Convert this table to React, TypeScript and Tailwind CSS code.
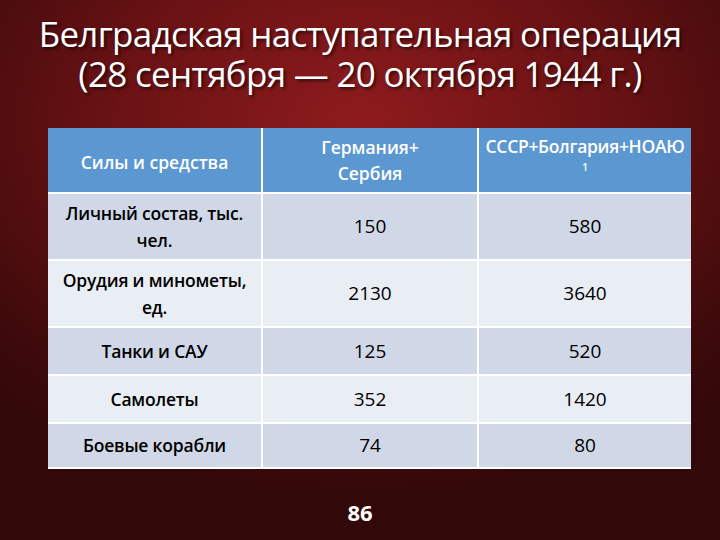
const rows = [
  { label: ["Личный состав, тыс.", "чел."], de: "150", su: "580", h: "h-[67px]", bg: "bg-[#d0d8e8]" },
  { label: ["Орудия и минометы,", "ед."], de: "2130", su: "3640", h: "h-[67px]", bg: "bg-[#e9edf4]" },
  { label: ["Танки и САУ"], de: "125", su: "520", h: "h-[48px]", bg: "bg-[#d0d8e8]" },
  { label: ["Самолеты"], de: "352", su: "1420", h: "h-[48px]", bg: "bg-[#e9edf4]" },
  { label: ["Боевые корабли"], de: "74", su: "80", h: "h-[45px]", bg: "bg-[#d0d8e8]" },
];

export default function App() {
  return (
    <div
      className="flex h-[540px] w-[720px] flex-col overflow-hidden bg-[radial-gradient(ellipse_75%_70%_at_50%_22%,#8e1b1d_0%,#6a1214_45%,#3e0a0b_85%,#330809_100%)] text-white"
      style={{ fontFamily: '"Open Sans", "Noto Sans", sans-serif' }}
    >
      <h1 className="mt-[14px] flex flex-col items-center text-[35px] leading-[40px] tracking-[-0.7px] [text-shadow:2px_2px_3px_rgba(0,0,0,0.6)]">
        <span>Белградская наступательная операция</span>
        <span>(28 сентября — 20 октября 1944 г.)</span>
      </h1>

      <table className="ml-[48px] mt-[34px] w-[643px] table-fixed border-collapse text-center text-black">
        <colgroup>
          <col className="w-[214px]" />
          <col className="w-[216px]" />
          <col className="w-[213px]" />
        </colgroup>
        <thead>
          <tr className="h-[65px] bg-[#5b97d0] text-[17.5px] font-semibold leading-[26px] text-white">
            <th className="border-r-2 border-b-2 border-white px-1 pt-[4px] font-semibold">Силы и средства</th>
            <th className="border-r-2 border-b-2 border-white px-1 font-semibold">
              Германия+
              <br />
              Сербия
            </th>
            <th className="border-b-2 border-white px-0 pb-[10px] font-semibold leading-[18px] tracking-[-0.3px]">
              СССР+Болгария+НОАЮ
              <br />
              <span className="text-[10px] leading-[10px]">1</span>
            </th>
          </tr>
        </thead>
        <tbody>
          {rows.map((r) => (
            <tr key={r.label[0]} className={`${r.h} ${r.bg}`}>
              <td className="border-r-2 border-b-2 border-white px-1 text-[17.5px] font-semibold leading-[27px] tracking-[-0.2px]">
                {r.label.map((l, i) => (
                  <div key={i}>{l}</div>
                ))}
              </td>
              <td className="border-r-2 border-b-2 border-white text-[19px]">{r.de}</td>
              <td className="border-b-2 border-white text-[19px]">{r.su}</td>
            </tr>
          ))}
        </tbody>
      </table>

      <div className="mt-[32px] text-center text-[22px] font-bold leading-none">86</div>
    </div>
  );
}
